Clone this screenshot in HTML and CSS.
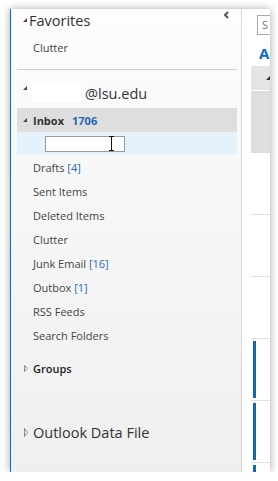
FILE: index.html
```html
<!DOCTYPE html>
<html lang="en">
<head>
    <meta charset="UTF-8">
    <meta name="viewport" content="width=device-width, initial-scale=1.0">
    <title>Outlook - Folders</title>
    <link rel="stylesheet" href="styles.css">
</head>
<body>
    <div class="window">
        <div class="folders">
            <div class="head fav">
                <span class="twisty"><svg width="4" height="4" viewBox="0 0 4 4"><polygon points="4,0 4,4 0,4" fill="#444"/></svg></span>
                <span>Favorites</span>
                <span class="collapse"><svg width="6" height="8" viewBox="0 0 6 8"><polyline points="5,1 2,4 5,7" fill="none" stroke="#555" stroke-width="2"/></svg></span>
            </div>
            <div class="row fav-item">Clutter</div>
            <div class="sep"></div>

            <div class="head account">
                <span class="twisty"><svg width="4" height="4" viewBox="0 0 4 4"><polygon points="4,0 4,4 0,4" fill="#444"/></svg></span>
                <span class="redact"></span>
                <span>@lsu.edu</span>
            </div>
            <div class="row inbox">
                <span class="twisty"><svg width="4" height="4" viewBox="0 0 4 4"><polygon points="4,0 4,4 0,4" fill="#444"/></svg></span>
                <b>Inbox</b><b class="count">1706</b>
            </div>
            <div class="row edit">
                <span class="rename">
                    <svg class="ibeam" width="5" height="15" viewBox="0 0 5 15"><path d="M0,0.5H5M0,14.5H5M2.5,0.5V14.5" fill="none" stroke="#111" stroke-width="1"/></svg>
                </span>
            </div>
            <div class="row">Drafts <span class="count">[4]</span></div>
            <div class="row">Sent Items</div>
            <div class="row">Deleted Items</div>
            <div class="row">Clutter</div>
            <div class="row">Junk Email <span class="count">[16]</span></div>
            <div class="row">Outbox <span class="count">[1]</span></div>
            <div class="row">RSS Feeds</div>
            <div class="row">Search Folders</div>

            <div class="row group">
                <span class="twisty"><svg width="4" height="7" viewBox="0 0 4 7"><polygon points="0.5,0.5 3.5,3.5 0.5,6.5" fill="none" stroke="#888" stroke-width="1"/></svg></span>
                <span>Groups</span>
            </div>
            <div class="head store">
                <span class="twisty"><svg width="4" height="9" viewBox="0 0 4 9"><polygon points="0.5,0.5 3.5,4.5 0.5,8.5" fill="none" stroke="#888" stroke-width="1"/></svg></span>
                <span>Outlook Data File</span>
            </div>
        </div>

        <div class="list">
            <div class="search">S</div>
            <div class="filter">All</div>
            <div class="list-head"><svg width="4" height="4" viewBox="0 0 4 4"><polygon points="4,0 4,4 0,4" fill="#333"/></svg></div>
            <div class="msg selected"></div>
            <div class="msg"></div>
            <div class="msg"></div>
            <div class="msg"></div>
            <div class="msg unread"><span class="bar"></span></div>
            <div class="msg unread"><span class="bar"></span></div>
            <div class="msg unread"><span class="bar"></span></div>
        </div>
    </div>
</body>
</html>
```

FILE: styles.css
```css
body {
    margin: 0;
    background-color: #fff;
    font-family: "Open Sans", "Noto Sans", sans-serif;
    color: #444;
}

.window {
    margin: 9px 0 0 10px;
    width: 260px;
    height: 463px;
    display: flex;
    border-left: 1px solid #0072c6;
    box-sizing: border-box;
    box-shadow: 0 0 8px rgba(0, 0, 0, 0.35);
    overflow: hidden;
}

/* folder pane */
.folders {
    width: 231px;
    padding: 0 4px 0 6px;
    box-sizing: border-box;
    border-right: 1px solid #d6d6d6;
    background: linear-gradient(#fdfdfd, #f9f9f9 25%, #efefef);
}

.head {
    display: flex;
    align-items: center;
    height: 22px;
    font-size: 14.5px;
    color: #333;
}

.twisty {
    width: 12px;
    display: flex;
    align-items: center;
    padding-left: 6px;
    box-sizing: border-box;
}

.fav .collapse {
    margin-left: auto;
    margin-right: 8px;
    margin-top: -10px;
    display: flex;
}

.fav-item {
    margin-top: 4px;
}

.sep {
    height: 1px;
    margin-top: 10px;
    background: #cfcfcf;
}

.account {
    margin-top: 12px;
}

.account .twisty {
    margin-top: -10px;
}

.redact {
    width: 50px;
    height: 18px;
    margin: 0 4px 0 2px;
    background: #fff;
}

.row {
    display: flex;
    align-items: center;
    height: 24px;
    padding-left: 16px;
    font-size: 11px;
    white-space: pre;
}

.count {
    color: #2a6ab4;
}

.inbox {
    padding-left: 0;
    background: #dedede;
    color: #333;
    margin-top: 4px;
}

.inbox .twisty {
    width: 16px;
}

.inbox .count {
    margin-left: 8px;
    color: #1f68b5;
}

.edit {
    height: 23px;
    padding-left: 28px;
    background: #e5f1fb;
}

.rename {
    display: flex;
    align-items: center;
    justify-content: flex-end;
    width: 80px;
    height: 16px;
    box-sizing: border-box;
    border: 1px solid #9a9a9a;
    background: #fff;
    padding-right: 10px;
}

.group {
    margin-top: 9px;
    padding-left: 0;
    color: #222;
    font-weight: 600;
}

.group .twisty {
    width: 16px;
    padding-left: 7px;
}

.store {
    margin-top: 41px;
}

.store .twisty {
    width: 16px;
    padding-left: 7px;
}

/* message list */
.list {
    width: 28px;
    background: #fff;
    overflow: hidden;
}

.search {
    margin: 6px 0 0 15px;
    width: 60px;
    height: 20px;
    box-sizing: border-box;
    border: 1px solid #ababab;
    padding-left: 4px;
    font-size: 11px;
    line-height: 17px;
    color: #777;
}

.filter {
    margin: 8px 0 3px 17px;
    height: 20px;
    line-height: 20px;
    font-size: 15px;
    font-weight: 700;
    color: #0a6ccc;
    white-space: nowrap;
}

.list-head {
    margin-left: 9px;
    height: 24px;
    background: #e4e4e4;
    display: flex;
    align-items: center;
    padding-left: 15px;
}

.msg {
    margin-left: 9px;
    height: 62px;
    box-sizing: border-box;
    border-bottom: 1px solid #e1e1e1;
    display: flex;
}

.msg.selected {
    margin-top: 1px;
    border-bottom: none;
    background: #dedede;
}

.bar {
    width: 3px;
    margin: 2px 0 2px 2px;
    background: #0f68b4;
}
```
